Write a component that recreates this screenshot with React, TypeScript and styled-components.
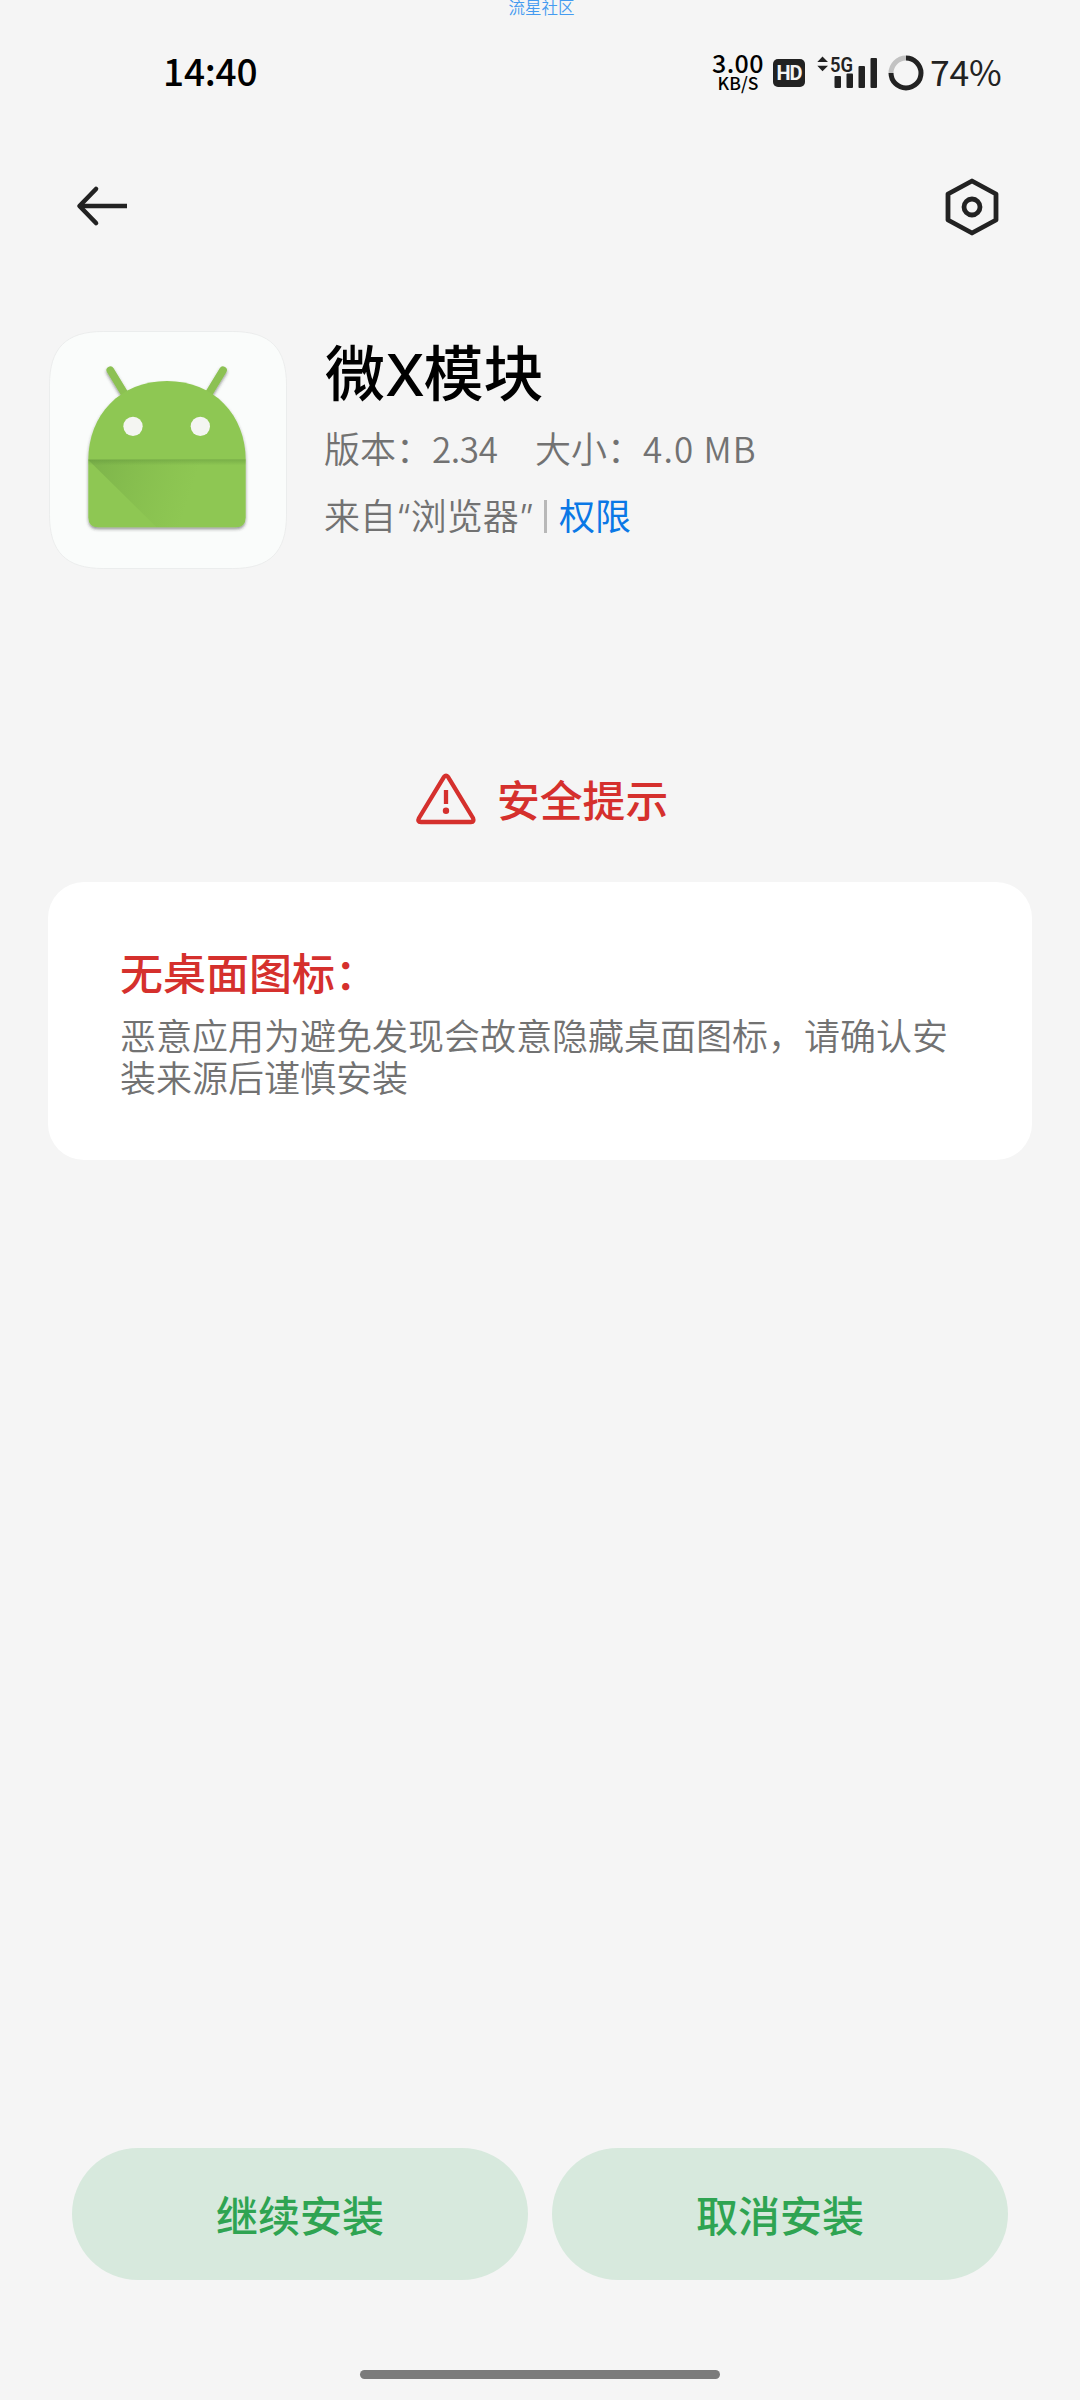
import React from "react";
import styled, { createGlobalStyle } from "styled-components";

const CJK = `"Noto Sans CJK SC", sans-serif`;
const LATIN = `Roboto, "Noto Sans CJK SC", sans-serif`;

const GlobalStyle = createGlobalStyle`
  *, *::before, *::after { box-sizing: border-box; }
  body { margin: 0; background: #f5f5f5; font-family: ${CJK}; }
  h1, h2, h3, p { margin: 0; font-weight: inherit; }
  button { border: 0; padding: 0; background: none; font: inherit; }
  svg { display: block; flex: none; overflow: visible; }
`;

const Screen = styled.div`
  width: 1080px;
  height: 2400px;
  display: flex;
  flex-direction: column;
  overflow: hidden;
  background: #f5f5f5;
  white-space: nowrap;
`;

const Watermark = styled.div`
  height: 18px;
  padding-left: 3px;
  text-align: center;
  font-size: 16.5px;
  line-height: 15px;
  font-weight: 350;
  color: #459bf0;
`;

const StatusBar = styled.header`
  height: 109px;
  padding: 0 78px 0 163px;
  display: flex;
  justify-content: space-between;
  align-items: center;
`;

const Clock = styled.time`
  padding-bottom: 5px;
  font-size: 37px;
  line-height: 44px;
  font-weight: 500;
  letter-spacing: -0.2px;
  color: #000;
`;

const StatusIcons = styled.div`
  display: flex;
  align-items: center;
`;

const Speed = styled.div`
  width: 52px;
  margin-right: 8px;
  padding-bottom: 3px;
  display: flex;
  flex-direction: column;
  align-items: center;
  font-weight: 500;
  color: #000;
`;

const SpeedValue = styled.span`
  font-size: 25px;
  line-height: 23px;
  letter-spacing: 0.4px;
`;

const SpeedUnit = styled.span`
  font-size: 17.5px;
  line-height: 18px;
`;

const HdBadge = styled.span`
  width: 32px;
  height: 28px;
  margin: 0 11px 0 1px;
  display: flex;
  justify-content: center;
  align-items: center;
  border-radius: 5px;
  background: #222;
  color: #f5f5f5;
  font-family: ${LATIN};
  font-size: 20px;
  line-height: 28px;
  font-weight: 700;
  letter-spacing: -1px;
`;

const Battery = styled.span`
  margin-left: 6px;
  width: 72px;
  padding-bottom: 4px;
  font-size: 35.5px;
  line-height: 44px;
  letter-spacing: -0.2px;
  color: #222;
`;

const Toolbar = styled.nav`
  height: 160px;
  padding: 0 78px 2px 74px;
  display: flex;
  justify-content: space-between;
  align-items: center;
`;

const IconButton = styled.button`
  width: 60px;
  height: 60px;
  display: flex;
  align-items: center;
  justify-content: center;
`;

const AppHeader = styled.section`
  height: 326px;
  padding: 44px 49px 0;
  display: flex;
  gap: 37px;
`;

const AppDetails = styled.div`
  display: flex;
  flex-direction: column;
`;

const AppName = styled.h1`
  height: 83px;
  padding-left: 1px;
  font-size: 60px;
  line-height: 78px;
  font-weight: 500;
  color: #000;
`;

const WideLetter = styled.span`
  font-family: Inter, sans-serif;
  font-size: 57px;
  line-height: 1;
  letter-spacing: -1.5px;
`;

const Meta = styled.p`
  height: 67px;
  display: flex;
  align-items: center;
  font-size: 36px;
  line-height: 67px;
  font-weight: 350;
  color: #727272;
`;

const MetaItem = styled.span<{ $width: number }>`
  width: ${(p) => p.$width}px;
`;

const Digits = styled.span<{ $spacing?: number }>`
  font-size: 35px;
  letter-spacing: ${(p) => p.$spacing ?? 0}px;
`;

const Quote = styled.span`
  font-family: Inter, sans-serif;
  line-height: 1;
`;

const Divider = styled.i`
  width: 3px;
  height: 33px;
  margin: 3px 12px 0 0;
  background: #b8b8b8;
`;

const Link = styled.a`
  font-weight: 400;
  color: #0a78e6;
`;

const Warning = styled.section`
  height: 269px;
  padding: 160px 0 0 415px;
  display: flex;
  align-items: flex-start;
  gap: 20px;
`;

const WarningTitle = styled.h2`
  height: 52px;
  font-size: 42.8px;
  line-height: 50px;
  font-weight: 500;
  color: #d5302d;
`;

const Card = styled.section`
  height: 278px;
  margin: 0 48px;
  padding: 61px 72px 0;
  border-radius: 36px;
  background: #fff;
`;

const CardTitle = styled.h3`
  font-size: 43px;
  line-height: 56px;
  font-weight: 500;
  color: #d5302d;
`;

const CardText = styled.p`
  margin-top: 14px;
  width: 850px;
  font-size: 36px;
  line-height: 42px;
  font-weight: 350;
  white-space: normal;
  word-break: break-all;
  color: #727272;
`;

const Actions = styled.footer`
  margin-top: auto;
  padding: 0 72px;
  display: flex;
  gap: 24px;
`;

const ActionButton = styled.button`
  flex: 1;
  height: 132px;
  border-radius: 66px;
  background: #d7e9dd;
  font-size: 42px;
  line-height: 132px;
  font-weight: 500;
  color: #2fa452;
`;

const HomeBar = styled.div`
  width: 360px;
  height: 9px;
  margin: 90px auto 21px;
  border-radius: 5px;
  background: #7b7b7b;
`;

const SignalIcon = () => (
  <svg width="62" height="36" viewBox="816 54 62 36" fill="#222">
    <path d="M817.3 61 L822.5 55.5 L828 61Z M817.3 64.8 L822.5 70.3 L828 64.8Z" />
    <text x="830" y="70.5" fontFamily="Roboto, sans-serif" fontSize="20" fontWeight="600" textLength="23" lengthAdjust="spacingAndGlyphs">5G</text>
    <rect x="834.5" y="75" width="6.5" height="12" rx="1" />
    <rect x="846.5" y="72.5" width="6.5" height="14.5" rx="1" />
    <rect x="858.5" y="65" width="6.5" height="22" rx="1" />
    <rect x="870.5" y="57" width="6.5" height="30" rx="1" />
  </svg>
);

const Ring = styled.svg`
  margin-left: 10px;
`;

const BatteryRing = () => (
  <Ring width="36" height="36" viewBox="-18 -18 36 36" fill="none" strokeWidth="5">
    <path d="M-15 0 A15 15 0 0 1 0 -15" stroke="#c2c2c2" />
    <path d="M0 -15 A15 15 0 1 1 -15 0" stroke="#222" />
  </Ring>
);

const BackIcon = () => (
  <svg width="60" height="60" viewBox="74 176 60 60" fill="none" stroke="#222" strokeWidth="4.6">
    <path d="M127 206 H80" />
    <path d="M96 189 L79.5 206 L96 223" strokeLinecap="round" strokeLinejoin="round" />
  </svg>
);

const SettingsIcon = () => (
  <svg width="60" height="60" viewBox="942 176 60 60" fill="none" stroke="#222" strokeWidth="4.8" strokeLinejoin="round">
    <path d="M972 181 L996 194 V220 L972 233 L948 220 V194Z" />
    <circle cx="972" cy="207" r="8" />
  </svg>
);

const WarningIcon = () => (
  <svg width="62" height="52" viewBox="415 772 62 52" fill="none" stroke="#d5302d" strokeLinejoin="round">
    <path d="M444 775.8 Q446 773.5 448 775.8 L473 817 Q474.5 821 471 821 H421 Q417 821 419 817Z" strokeWidth="4.3" />
    <path d="M446 789 V803" strokeWidth="4.3" />
    <circle cx="446" cy="809.7" r="3.2" fill="#d5302d" stroke="none" />
  </svg>
);

const AppIcon = () => (
  <svg width="238" height="238" viewBox="27 33 714 714">
    <defs>
      <linearGradient id="fold" x1="150" y1="430" x2="450" y2="530" gradientUnits="userSpaceOnUse">
        <stop offset="0" stopColor="#5c8e3b" stopOpacity=".34" />
        <stop offset="1" stopColor="#6fa63d" stopOpacity="0" />
      </linearGradient>
      <linearGradient id="seam" x1="0" y1="0" x2="0" y2="1">
        <stop offset="0" stopColor="#5e913a" stopOpacity=".45" />
        <stop offset="1" stopColor="#5e913a" stopOpacity="0" />
      </linearGradient>
      <filter id="shade" x="-10%" y="-10%" width="120%" height="125%">
        <feDropShadow dx="0" dy="6" stdDeviation="5" floodColor="#333" floodOpacity=".5" />
      </filter>
    </defs>
    <path
      d="M190 34.5 H578 C690 34.5 739.5 84 739.5 196 V584 C739.5 696 690 745.5 578 745.5 H190 C78 745.5 28.5 696 28.5 584 V196 C28.5 84 78 34.5 190 34.5Z"
      fill="#fafcfb"
      stroke="#e6e7e7"
      strokeWidth="2"
    />
    <g filter="url(#shade)">
      <path d="M211 151 L258 228 M549 151 L502 228" stroke="#8cc152" strokeWidth="23" strokeLinecap="round" />
      <path d="M145 420 C145 285 240 183 381 183 C522 183 617 285 617 420 V592 Q617 622 587 622 H175 Q145 622 145 592Z" fill="#8ec752" />
    </g>
    <path d="M145 420 H617 V592 Q617 622 587 622 H350Z" fill="url(#fold)" />
    <rect x="145" y="418" width="472" height="18" fill="url(#seam)" />
    <circle cx="279" cy="319" r="29" fill="#f4f5f2" />
    <circle cx="481" cy="319" r="29" fill="#f4f5f2" />
  </svg>
);

export default function App() {
  return (
    <>
      <GlobalStyle />
      <Screen>
        <Watermark>流星社区</Watermark>
        <StatusBar>
          <Clock>14:40</Clock>
          <StatusIcons>
            <Speed>
              <SpeedValue>3.00</SpeedValue>
              <SpeedUnit>KB/S</SpeedUnit>
            </Speed>
            <HdBadge>HD</HdBadge>
            <SignalIcon />
            <BatteryRing />
            <Battery>74%</Battery>
          </StatusIcons>
        </StatusBar>
        <Toolbar>
          <IconButton aria-label="返回"><BackIcon /></IconButton>
          <IconButton aria-label="设置"><SettingsIcon /></IconButton>
        </Toolbar>
        <AppHeader>
          <AppIcon />
          <AppDetails>
            <AppName>微<WideLetter>X</WideLetter>模块</AppName>
            <Meta>
              <MetaItem $width={211}>版本：<Digits $spacing={-0.4}>2.34</Digits></MetaItem>
              <span>大小：<Digits $spacing={1.2}>4.0 MB</Digits></span>
            </Meta>
            <Meta>
              <MetaItem $width={220}>来自<Quote>“</Quote>浏览器<Quote>”</Quote></MetaItem>
              <Divider />
              <Link>权限</Link>
            </Meta>
          </AppDetails>
        </AppHeader>
        <Warning>
          <WarningIcon />
          <WarningTitle>安全提示</WarningTitle>
        </Warning>
        <Card>
          <CardTitle>无桌面图标：</CardTitle>
          <CardText>恶意应用为避免发现会故意隐藏桌面图标，请确认安装来源后谨慎安装</CardText>
        </Card>
        <Actions>
          <ActionButton>继续安装</ActionButton>
          <ActionButton>取消安装</ActionButton>
        </Actions>
        <HomeBar />
      </Screen>
    </>
  );
}
